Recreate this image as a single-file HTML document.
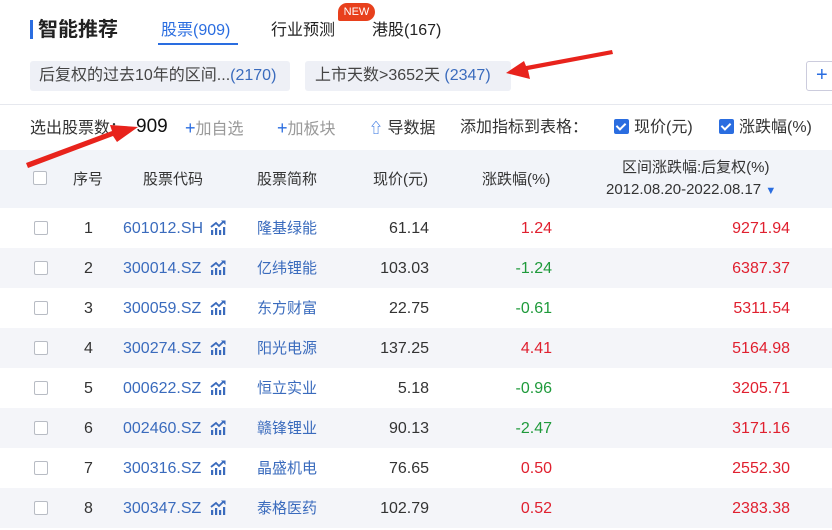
<!DOCTYPE html>
<html><head><meta charset="utf-8"><style>
*{margin:0;padding:0;box-sizing:border-box}
body{width:832px;height:530px;overflow:hidden;background:#fff;font-family:"Liberation Sans","Noto Sans CJK SC",sans-serif;color:#333;position:relative;line-height:20px}
.a{position:absolute;white-space:nowrap;line-height:20px}
.row{position:absolute;left:0;width:832px;height:40px;font-size:16px}
.row.g{background:#f4f5f9}
.row span{position:absolute;top:11px;white-space:nowrap;line-height:20px}
.row span.cn{font-size:15px}
.cb{position:absolute;left:34px;top:13px;width:14px;height:14px;border:1px solid #b8bcc4;border-radius:2px;background:#fff}
.blue{color:#3a6bbd}
.red{color:#e0202f}
.grn{color:#1f9a3b}
.chk{display:inline-block;width:15px;height:15px;background:#2a6de0;border-radius:2px;vertical-align:-2px;margin-right:5px;position:relative}
.chk:after{content:"";position:absolute;left:4px;top:2px;width:4px;height:7px;border:solid #fff;border-width:0 2px 2px 0;transform:rotate(45deg)}
</style></head><body>
<div class="a" style="left:30px;top:20px;width:3px;height:19px;background:#2a6de0"></div>
<div class="a" style="left:38px;top:19px;font-size:20px;font-weight:bold;color:#222;line-height:22px">智能推荐</div>
<div class="a" style="left:161px;top:21px;font-size:16px;color:#2a6de0">股票(909)</div>
<div class="a" style="left:158px;top:43px;width:80px;height:2px;background:#2a6de0"></div>
<div class="a" style="left:271px;top:21px;font-size:16px;color:#222">行业预测</div>
<div class="a" style="left:338px;top:3px;width:37px;height:18px;border-radius:9px 9px 9px 2px;background:#e8401c;color:#fff;font-size:11px;line-height:18px;text-align:center">NEW</div>
<div class="a" style="left:372px;top:21px;font-size:16px;color:#222">港股(167)</div>

<div class="a" style="left:30px;top:61px;width:260px;height:30px;background:#eef0f6;border-radius:3px;font-size:16px;line-height:30px;padding-left:9px;color:#444">后复权的过去10年的区间...<span class="blue">(2170)</span></div>
<div class="a" style="left:305px;top:61px;width:206px;height:30px;background:#eef0f6;border-radius:3px;font-size:16px;line-height:30px;padding-left:10px;color:#444">上市天数&gt;3652天 <span class="blue">(2347)</span></div>
<div class="a" style="left:806px;top:61px;width:40px;height:30px;border:1px solid #ccd;border-radius:3px;font-size:20px;line-height:27px;padding-left:9px;color:#2a6de0">+</div>
<div class="a" style="left:0;top:104px;width:832px;height:1px;background:#e6e8ee"></div>

<div class="a" style="left:30px;top:119px;font-size:16px;color:#333">选出股票数：</div>
<div class="a" style="left:136px;top:117px;font-size:19px;color:#111">909</div>
<div class="a" style="left:185px;top:118px;font-size:16px;color:#999"><span style="color:#2a6de0;font-size:18px">+</span>加自选</div>
<div class="a" style="left:277px;top:118px;font-size:16px;color:#999"><span style="color:#2a6de0;font-size:18px">+</span>加板块</div>
<div class="a" style="left:369px;top:118px;font-size:16px;color:#333"><span style="color:#2a6de0;font-size:14px">⇧</span> 导数据</div>
<div class="a" style="left:460px;top:118px;font-size:16px;color:#333">添加指标到表格：</div>
<div class="a" style="left:614px;top:118px;font-size:16px;color:#333"><span class="chk"></span>现价(元)</div>
<div class="a" style="left:719px;top:118px;font-size:16px;color:#333"><span class="chk"></span>涨跌幅(%)</div>

<div class="a" style="left:0;top:150px;width:832px;height:58px;background:#f2f4f9"></div>
<div class="a" style="left:33px;top:171px;width:14px;height:14px;border:1px solid #b8bcc4;border-radius:2px;background:#fff"></div>
<div class="a" style="left:73px;top:170px;font-size:15px">序号</div>
<div class="a" style="left:143px;top:170px;font-size:15px">股票代码</div>
<div class="a" style="left:257px;top:170px;font-size:15px">股票简称</div>
<div class="a" style="left:373px;top:170px;font-size:15px">现价(元)</div>
<div class="a" style="left:482px;top:170px;font-size:15px">涨跌幅(%)</div>
<div class="a" style="left:622px;top:158px;font-size:15px">区间涨跌幅:后复权(%)</div>
<div class="a" style="left:606px;top:180px;font-size:15px">2012.08.20-2022.08.17 <span style="color:#2a6de0;font-size:11px">▼</span></div>

<div id="rows"></div>
<script>
var d=[["1","601012.SH","隆基绿能","61.14","1.24","9271.94"],["2","300014.SZ","亿纬锂能","103.03","-1.24","6387.37"],["3","300059.SZ","东方财富","22.75","-0.61","5311.54"],["4","300274.SZ","阳光电源","137.25","4.41","5164.98"],["5","000622.SZ","恒立实业","5.18","-0.96","3205.71"],["6","002460.SZ","赣锋锂业","90.13","-2.47","3171.16"],["7","300316.SZ","晶盛机电","76.65","0.50","2552.30"],["8","300347.SZ","泰格医药","102.79","0.52","2383.38"]];
var ic='<svg width="17" height="16" viewBox="0 0 17 16" style="position:absolute;left:87px;top:1px"><g fill="#3a6bbd"><rect x="1" y="10" width="2.2" height="5"/><rect x="5" y="8" width="2.2" height="7"/><rect x="9" y="10" width="2.2" height="5"/><rect x="13" y="7" width="2.2" height="8"/></g><path d="M1 7 L6 3 L9 6 L14 1" stroke="#3a6bbd" stroke-width="1.8" fill="none"/><path d="M11 0.5 L15.5 0.5 L15.5 5 Z" fill="#3a6bbd"/></svg>';
var h='';
d.forEach(function(r,i){var c=r[4][0]=='-'?'grn':'red';
h+='<div class="row'+(i%2?' g':'')+'" style="top:'+(208+i*40)+'px"><div class="cb"></div><span style="left:84px">'+r[0]+'</span><span class="blue" style="left:123px">'+r[1]+ic+'</span><span class="blue cn" style="left:257px">'+r[2]+'</span><span style="right:403px">'+r[3]+'</span><span class="'+c+'" style="right:280px">'+r[4]+'</span><span class="red" style="right:42px">'+r[5]+'</span></div>';});
document.getElementById('rows').innerHTML=h;
</script>
<svg class="a" style="left:0;top:0" width="832" height="530">
<polygon points="612,50 613,54 528,70 530,79 506,73 524,61 526,66" fill="#e8231c"/>
<polygon points="26,163 28,168 113,136 117,142 138,127 110,125 112,131" fill="#e8231c"/>
</svg>
</body></html>
